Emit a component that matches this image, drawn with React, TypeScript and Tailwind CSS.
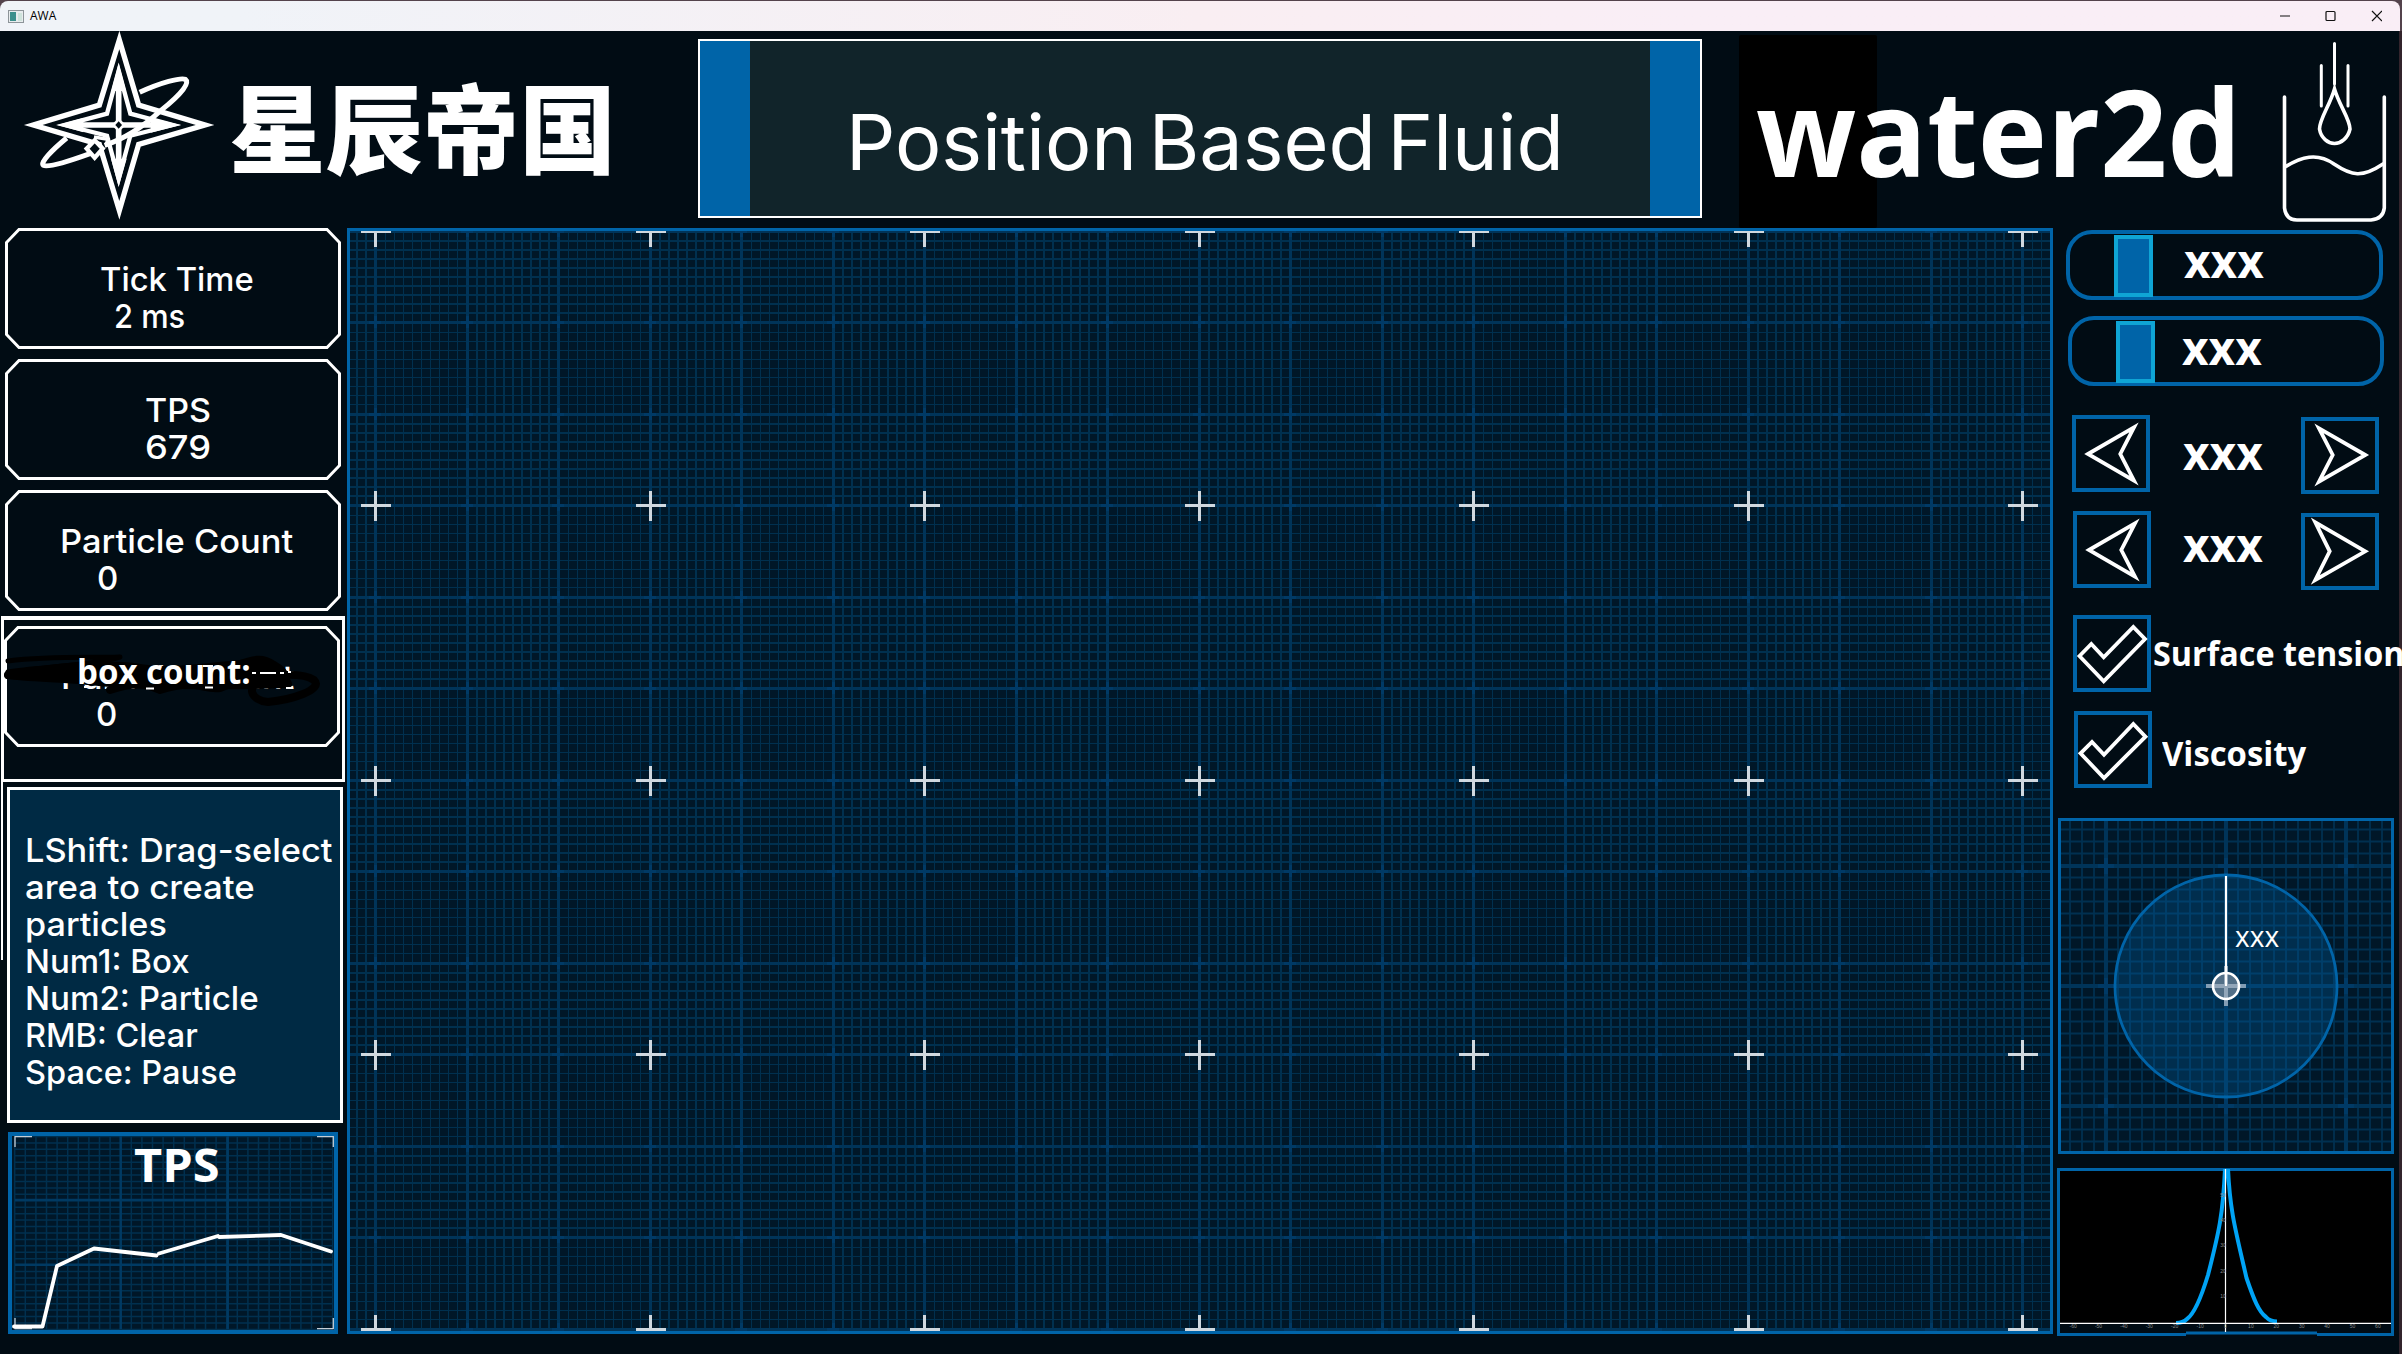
import React, { useLayoutEffect, useRef, useState } from "react";

/* One line of text stretched horizontally to a given width. */
function Fit({ w, className = "", children }: { w: number; className?: string; children: string }) {
  const ref = useRef<HTMLSpanElement>(null);
  const [scale, setScale] = useState(1);
  useLayoutEffect(() => {
    if (ref.current) setScale(w / ref.current.offsetWidth);
  }, [w, children]);
  return (
    <div className={"whitespace-nowrap " + className}>
      <span ref={ref} className="inline-block origin-left" style={{ transform: `scaleX(${scale})` }}>
        {children}
      </span>
    </div>
  );
}

const hud = "font-['Inter'] font-medium text-[33px] leading-[37px] text-white";
const bold = "font-['Open_Sans'] font-bold text-white";

function TitleBar() {
  return (
    <div className="h-[31px] shrink-0 bg-[#54434c] pt-px">
      <div className="mr-[2px] flex h-[30px] items-center rounded-t-lg bg-linear-to-r from-[#f0f3f8] from-10% via-[#f9eef2] via-50% to-[#f9eef6] to-70%">
        <svg className="ml-2 h-[13px] w-4" viewBox="0 0 16 13">
          <rect x=".5" y=".5" width="15" height="12" fill="#e8ecee" stroke="#8d9499" />
          <rect x="2" y="2" width="6" height="9" fill="#3c8f8c" />
          <rect x="10" y="3" width="4" height="8" fill="#cfe3dc" />
        </svg>
        <div className="ml-[6px] font-['Open_Sans'] text-xs text-black">
          <Fit w={26}>AWA</Fit>
        </div>
        <svg className="mr-[18px] ml-auto h-[12px] w-[104px]" viewBox="0 0 104 12" fill="none" stroke="#111" strokeWidth="1.2">
          <path d="M2 6H12M94 1L104 11M104 1L94 11" />
          <rect x="48" y="1.5" width="9" height="9" rx="1" />
        </svg>
      </div>
    </div>
  );
}

function StarLogo() {
  return (
    <svg className="h-[200px] w-[210px] shrink-0" viewBox="0 0 630 600" fill="none" stroke="#fff">
      <g strokeMiterlimit="10">
        <path strokeWidth="16" d="M316 42L374 237L573 297L374 355L316 553L256 355L58 297L256 237Z" />
        <path strokeWidth="13" d="M314 134L349 263L476 297L349 329L314 458L279 329L152 297L279 263Z" />
      </g>
      <path fill="#fff" stroke="none" d="M314 112L336 195H292ZM314 482L338 398H291ZM130 297L208 276V319ZM500 297L410 275V320Z" />
      <path strokeWidth="17" d="M314 180V420M190 297H430" />
      <path fill="#fff" stroke="none" d="M314 276L336 297L314 318L292 297Z" />
      <path fill="#010c14" stroke="none" d="M314 286L324 297L314 308L304 297Z" />
      <g strokeWidth="15">
        <path d="M377 199C440 170 500 154 514 160C527 170 508 200 440 254C390 300 340 336 272 358" />
        <path d="M158 336C112 374 78 410 88 418C104 426 170 404 228 383" />
      </g>
      <path fill="#010c14" strokeWidth="13" d="M242 343L266 368L242 395L218 368Z" />
      <path strokeWidth="10" d="M240 333L282 340L276 356" />
    </svg>
  );
}

function BeakerIcon() {
  return (
    <svg className="h-[190px] w-[112px] shrink-0" viewBox="2276 35 112 190" fill="none" stroke="#fff" strokeWidth="3.6" strokeLinecap="round">
      <path d="M2284.500 97V208Q2286 220 2297 220H2371Q2383 219 2384.300 208V97" />
      <path d="M2285 167C2301 157 2317 152 2334 164C2352 176 2362 178 2383 164" />
      <path d="M2334.500 43.500V84M2321.300 65.500V106M2348 65.500V106" strokeWidth="3" />
      <path d="M2334.500 89C2330 105 2319.500 119 2319.500 129C2321 138 2328 143.500 2334.500 143.500C2341 143.500 2348 138 2350 129C2350 119 2339 105 2334.500 89Z" />
    </svg>
  );
}

function Header() {
  return (
    <header className="flex h-[197px] shrink-0 items-start">
      <div className="-mt-[5px] ml-[14px]">
        <StarLogo />
      </div>
      <div className="mt-[23px] ml-[5px] w-[469px] font-['Noto_Sans_CJK_SC'] text-[97px] leading-[140px] font-black text-white">
        <Fit w={387}>星辰帝国</Fit>
      </div>
      <div className="mt-[8px] flex h-[179px] w-[1004px] border-2 border-white bg-[#11242a]">
        <div className="w-[50px] bg-[#0064a8]" />
        <div className="flex-1 pt-[62px] pl-[96px] font-['Inter'] text-[77px] leading-[78px] [word-spacing:-10px] text-white">
          <Fit w={718}>Position Based Fluid</Fit>
        </div>
        <div className="w-[50px] bg-[#0064a8]" />
      </div>
      <div className="mt-[4px] ml-[37px] h-[193px] w-[138px] rounded-xs bg-black">
        <div className={bold + " pt-[34px] pl-[17px] text-[121px] leading-[122px]"}>
          <Fit w={485}>water2d</Fit>
        </div>
      </div>
      <div className="mt-[4px] ml-[399px]">
        <BeakerIcon />
      </div>
    </header>
  );
}

function CardFrame() {
  return (
    <svg className="absolute inset-0 h-[121px] w-[336px]" viewBox="0 0 336 121" fill="none" stroke="#fff" strokeWidth="3">
      <path d="M14 1.500H322L334.500 14.500V106.500L322 119.500H14L1.500 106.500V14.500Z" />
    </svg>
  );
}

function StatCard(p: { label: string; lx: string; lw: number; value: string; vx: string; vw: number }) {
  return (
    <div className={"relative ml-[5px] h-[121px] w-[336px] pt-[33px] " + hud}>
      <CardFrame />
      <Fit w={p.lw} className={p.lx}>{p.label}</Fit>
      <Fit w={p.vw} className={p.vx}>{p.value}</Fit>
    </div>
  );
}

function BoxCard() {
  return (
    <div className="relative mt-[5px] ml-px h-[166px] w-[344px] border-3 border-t-4 border-white pt-[6px]">
      <div className={"relative h-[121px] w-[336px] pt-[33px] " + hud}>
        <CardFrame />
        <Fit w={233} className="ml-[57px]">Particle Count</Fit>
        <Fit w={21} className="ml-[92px]">0</Fit>
        <svg className="absolute top-[14px] left-[-4px] h-[80px] w-[340px]" viewBox="0 0 340 80" fill="none" stroke="#000" strokeLinecap="round" strokeLinejoin="round">
          <path strokeWidth="5" d="M8 21C50 16 90 18 120 17C90 26 40 27 8 32" />
          <path strokeWidth="8" d="M8 35C50 28 100 22 140 28C170 34 230 24 262 22C280 26 285 36 288 44C240 46 120 46 80 40C50 38 20 37 8 35" fill="#000" />
          <path strokeWidth="8" d="M66 30C100 20 110 40 122 46M110 50C140 40 150 46 160 50C200 38 200 50 220 48C250 36 300 30 314 40C324 50 290 60 268 62C250 60 246 46 262 40" />
          <path strokeWidth="6" d="M225 28C250 20 260 14 274 24C285 30 288 36 286 42" />
          <path stroke="#fff" strokeWidth="2" strokeLinecap="butt" d="M203 26H213M252 33H256M260 33H276M280 33H284M288 32H291M146 48.500H154M205 47.500H213M286 48H291M84 47H89" />
        </svg>
        <div className={bold + " absolute top-[27px] left-[73px] text-[34px] leading-[37px]"}>
          <Fit w={174}>box count:</Fit>
        </div>
      </div>
    </div>
  );
}

const help: [string, number][] = [
  ["LShift: Drag-select", 308],
  ["area to create", 230],
  ["particles", 142],
  ["Num1: Box", 165],
  ["Num2: Particle", 234],
  ["RMB: Clear", 173],
  ["Space: Pause", 212],
];

function range(from: number, n: number, step: number) {
  return Array.from({ length: n }, (_, i) => from + i * step);
}

function TpsChart() {
  return (
    <div className="mt-[9px] ml-[8px] h-[202px] w-[330px] border-4 border-[#0064a8] bg-[#001728]">
      <div className="relative h-full">
        <svg className="absolute inset-0 h-[194px] w-[322px]" viewBox="12 1136 322 194" fill="none">
          <path stroke="#00304f" strokeWidth="1.500" d={range(14.7, 31, 10.6).map((x) => `M${x} 1137V1329`).join("") + range(1136.5, 31, 6.43).map((y) => `M15 ${y}H333`).join("")} />
          <path stroke="#003a63" strokeWidth="2.500" d="M120.700 1136V1329M227.700 1136V1329M15 1200H333M15 1264.700H333" />
          <path stroke="#c5ced6" strokeWidth="1.300" d="M15 1147V1136.500H32M317 1136.500H333.300V1147M15 1318V1328.600H32M317 1328.600H333.300V1318" />
          <path stroke="#fff" strokeWidth="3.800" strokeLinecap="round" strokeLinejoin="round" d="M14 1326.500H42.500L57 1266L94 1248.500L156.500 1255.500M159 1253.500L218 1236L219 1237L281 1235L331 1251.500" />
        </svg>
        <div className={bold + " absolute top-px left-[122px] text-[47px] leading-[54px]"}>
          <Fit w={86}>TPS</Fit>
        </div>
      </div>
    </div>
  );
}

function LeftColumn() {
  return (
    <aside className="flex w-[347px] shrink-0 flex-col">
      <div className="flex flex-col gap-[10px]">
        <StatCard label="Tick Time" lx="ml-[95px]" lw={154} value="2 ms" vx="ml-[109px]" vw={71} />
        <StatCard label="TPS" lx="ml-[140px]" lw={66} value="679" vx="ml-[140px]" vw={66} />
        <StatCard label="Particle Count" lx="ml-[55px]" lw={233} value="0" vx="ml-[92px]" vw={21} />
      </div>
      <BoxCard />
      <div className="relative mt-[5px] ml-[7px] h-[336px] w-[336px] border-3 border-white bg-[#002a44]">
        <div className={"ml-[15px] pt-[42px] " + hud}>
          {help.map(([t, w]) => (
            <Fit key={t} w={w}>{t}</Fit>
          ))}
        </div>
        <div className="absolute top-[-8px] left-[-9px] h-[178px] w-[2px] bg-white" />
      </div>
      <TpsChart />
    </aside>
  );
}

function Canvas() {
  const X0 = 28;
  const Y0 = 2.7;
  const S = 91.5;
  const majX = range(X0, 19, S).map(Math.round);
  const majY = range(Y0, 13, S).map(Math.round);
  const rects: React.ReactNode[] = [];
  let minor = "";
  [Math.round(X0 - S), ...majX].forEach((m, c) => {
    const thin = c % 2;
    for (let i = 1; i < 10; i++) {
      const x = m + i * 9 + thin;
      const w = 2 - thin;
      if (x > 1 && x < 1703) minor += `M${x} 3h${w}V1103h${-w}Z`;
    }
  });
  majY.slice(0, 12).forEach((m, r) => {
    const thin = r % 2;
    for (let i = 1; i < 10; i++) {
      minor += `M3 ${m + i * 9 + thin}H1703v${2 - thin}H3Z`;
    }
  });
  const major = majX.map((x) => `M${x - 1} 3h3V1103h-3Z`).join("") + majY.map((y) => `M3 ${y - 1}H1703v3H3Z`).join("");
  majX.forEach((x, i) =>
    majY.forEach((y, j) => {
      const white = i % 3 === 0 && j % 3 === 0;
      const a = white ? 15 : 6;
      const b = a - (white ? 1 : 0);
      rects.push(
        <path key={i + "-" + j} fill={white ? "#d0d8df" : "#003a66"} d={`M${x - b} ${y - 1}h${2 * a}v3h${-2 * a}ZM${x - 1} ${y - b}h3v${2 * a}h-3Z`} />,
      );
    }),
  );
  return (
    <main className="h-[1106px] w-[1706px] shrink-0 overflow-hidden border-3 border-[#0064a8] bg-[#001728]">
      <svg className="h-[1100px] w-[1700px]" viewBox="3 3 1700 1100">
        <path fill="#00304f" d={minor} />
        <path fill="#003459" d={major} />
        {rects}
      </svg>
    </main>
  );
}

function Slider({ track, knob, gap, w }: { track: string; knob: string; gap: string; w: number }) {
  return (
    <div className={"flex h-[70px] rounded-[26px] border-4 border-[#0064a8] " + track}>
      <div className={"h-[62px] w-[39px] border-4 border-[#0fa5d5] bg-[#0064a8] " + knob} />
      <div className={bold + " text-[46px] leading-[46px] " + gap}>
        <Fit w={w}>xxx</Fit>
      </div>
    </div>
  );
}

function IconBox({ d, className = "" }: { d: string; className?: string }) {
  return (
    <div className={"h-[77px] w-[78px] shrink-0 border-4 border-[#0064a8] " + className}>
      <svg className="h-[69px] w-[70px] overflow-visible" viewBox="4 4 70 69" fill="none" stroke="#fff" strokeWidth="3.800" strokeMiterlimit="10">
        <path d={d} />
      </svg>
    </div>
  );
}

function RadiusPanel() {
  return (
    <div className="mt-[30px] ml-[5px] h-[336px] w-[336px] border-3 border-[#0064a8] bg-[#001728]">
      <div className="relative h-[330px]">
        <svg className="absolute inset-0 h-[330px] w-[330px]" viewBox="2061 821 330 330" fill="none">
          <path stroke="#003050" strokeWidth="1.800" d={range(2070, 27, 12).map((x) => `M${x} 821V1151`).join("") + range(829.5, 27, 12).map((y) => `M2061 ${y}H2391`).join("")} />
          <path stroke="#003459" strokeWidth="4" d="M2106 821V1151M2226 821V1151M2346 821V1151M2061 866H2391M2061 986H2391M2061 1106H2391" />
          <path stroke="#003a66" strokeWidth="4" d="M2098 866H2114M2106 858V874M2218 866H2234M2226 858V874M2338 866H2354M2346 858V874M2098 1106H2114M2106 1098V1114M2218 1106H2234M2226 1098V1114M2338 1106H2354M2346 1098V1114M2098 986H2114M2106 978V994M2338 986H2354M2346 978V994" />
          <circle cx="2226" cy="986" r="111" fill="#0064a8" fillOpacity=".3" stroke="#0064a8" strokeWidth="2.800" />
          <circle cx="2226" cy="986" r="13" fill="#526f87" />
          <path stroke="#a3b4c5" strokeOpacity=".8" strokeWidth="4" d="M2206 986H2246M2226 966V1006" />
          <path stroke="#fff" strokeWidth="2.200" d="M2226 876V986" />
          <circle cx="2226" cy="986" r="13" stroke="#fff" strokeWidth="2.600" />
        </svg>
        <div className="absolute top-[97px] left-[174px] font-['Open_Sans'] text-[30px] leading-[36px] text-white">
          <Fit w={44}>xxx</Fit>
        </div>
      </div>
    </div>
  );
}

function KernelPanel() {
  return (
    <div className="mt-[14px] ml-[4px] h-[169px] w-[337px]">
      <svg className="h-[169px] w-[337px]" viewBox="2057 1168 337 169" fill="none">
        <rect x="2060" y="1171" width="331" height="152" fill="#000" />
        <path stroke="#0064a8" strokeWidth="3" d="M2186 1334.500H2058.500V1169.500H2392.500V1334.500H2317M2186 1333H2317" />
        <path stroke="#00a3f5" strokeWidth="4" d="M2225 1169C2223 1214 2219 1232 2208 1275C2201 1298 2194 1314 2187 1319Q2183 1323 2176 1323M2228 1169C2230 1212 2236 1232 2246.500 1278C2254 1300 2259 1312 2266 1317Q2270 1321.500 2277 1321.500" />
        <path stroke="#fff" strokeWidth="1.200" d="M2225.500 1169V1332M2060 1323.300H2391" />
        <g fill="#8a8a8a" fontSize="5" textAnchor="middle" fontFamily="Liberation Sans">
          {range(-60, 13, 10).map((v) => (
            <text key={v} x={2225.5 + v * 2.54} y="1328">{v}</text>
          ))}
          {range(10, 5, 10).map((v) => (
            <text key={v} x="2223" y={1323 - v * 2.52}>{v}</text>
          ))}
        </g>
      </svg>
    </div>
  );
}

function RightColumn() {
  return (
    <aside className="flex w-[349px] shrink-0 flex-col">
      <Slider track="mt-[2px] ml-[13px] w-[317px]" knob="mt-px ml-[44px]" gap="mt-[3px] ml-[31px]" w={80} />
      <Slider track="mt-[16px] ml-[15px] w-[316px]" knob="mt-px ml-[44px]" gap="mt-[4px] ml-[27px]" w={80} />
      <div className="mt-[29px] ml-[19px] flex">
        <IconBox d="M16 39L62 12.300L48.300 39L62 65.700Z" />
        <div className={bold + " mt-[14px] ml-[33px] w-[118px] text-[46px] leading-[46px]"}>
          <Fit w={80}>xxx</Fit>
        </div>
        <IconBox className="mt-[2px]" d="M64.300 38L18 11.300L31.700 38L18 64.700Z" />
      </div>
      <div className="mt-[17px] ml-[20px] flex">
        <IconBox d="M16 39L62 12.300L48.300 39L62 65.700Z" />
        <div className={bold + " mt-[10px] ml-[32px] w-[118px] text-[46px] leading-[46px]"}>
          <Fit w={80}>xxx</Fit>
        </div>
        <IconBox className="mt-[2px]" d="M64.300 38.300L14.300 9.300L28.700 38.300L14.300 67Z" />
      </div>
      <div className="mt-[25px] ml-[20px] flex">
        <IconBox d="M6.500 41L18.300 29L30.700 42.300L60.300 12L72 24L30.700 66.300Z" />
        <div className={bold + " mt-[19px] ml-[2px] text-[34px] leading-[38px]"}>
          <Fit w={251}>Surface tension</Fit>
        </div>
      </div>
      <div className="mt-[19px] ml-[21px] flex">
        <IconBox d="M6.500 42.300L18 31L30 43.700L59.300 13L71.500 25.700L30 67Z" />
        <div className={bold + " mt-[23px] ml-[10px] text-[34px] leading-[38px]"}>
          <Fit w={144}>Viscosity</Fit>
        </div>
      </div>
      <RadiusPanel />
      <KernelPanel />
    </aside>
  );
}

export default function App() {
  return (
    <div className="flex h-[1354px] w-[2402px] flex-col overflow-hidden bg-[#010c14]">
      <TitleBar />
      <div className="flex h-[1323px] flex-col border-r-3 border-[#33242c]">
        <Header />
        <div className="flex">
          <LeftColumn />
          <Canvas />
          <RightColumn />
        </div>
      </div>
    </div>
  );
}
